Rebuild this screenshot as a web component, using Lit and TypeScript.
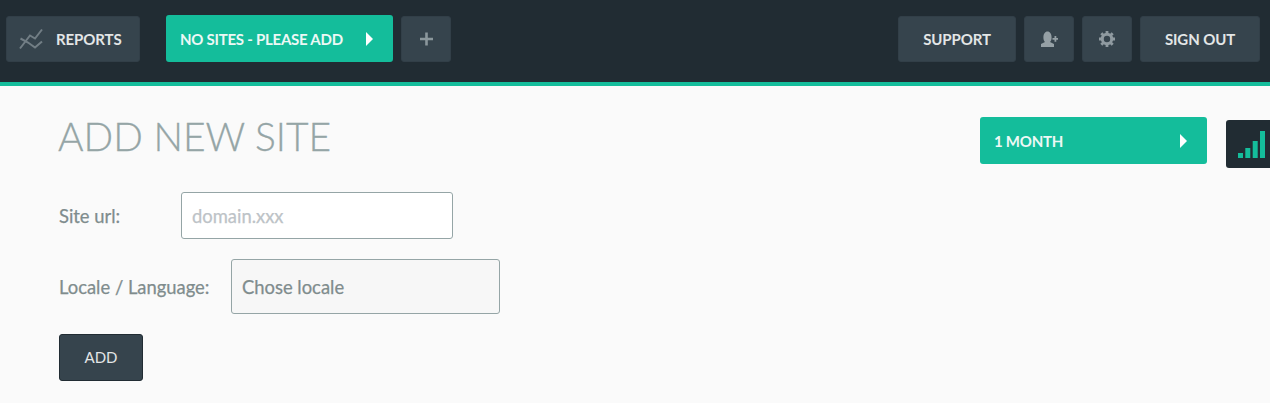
import { LitElement, html, css } from "lit";
import { customElement } from "lit/decorators.js";

@customElement("app-root")
export class AppRoot extends LitElement {
  static styles = css`
    :host { display: block; width: 1270px; height: 403px; overflow: hidden; background: #fafafa; font-family: Lato, sans-serif; }
    * { box-sizing: border-box; }
    header { height: 86px; background: #212c33; border-bottom: 4px solid #14bd9b; display: flex; align-items: flex-start; padding: 15px 10px 0 6px; }
    .btn { height: 46px; margin-top: 1px; display: flex; align-items: center; justify-content: center; background: #36444d; border: 1px solid #323f48; border-radius: 3px; color: #e3e6e6; font-size: 15px; font-weight: 700; letter-spacing: -0.1px; padding-bottom: 1px; }
    .reports { width: 134px; justify-content: flex-start; padding-left: 12px; gap: 13px; }
    .teal { background: #14bd9b; color: #ecf8f5; border-radius: 3px; height: 47px; display: flex; align-items: center; justify-content: space-between; font-size: 15px; font-weight: 700; letter-spacing: -0.25px; width: 227px; padding: 0 20px 0 14px; }
    .nosites { margin-left: 26px; }
    .square { width: 50px; }
    .plus { margin-left: 8px; }
    .support { margin-left: auto; width: 118px; }
    .g8 { margin-left: 8px; }
    .signout { width: 120px; }
    .arrow { width: 0; height: 0; border-style: solid; border-width: 7px 0 7px 7px; border-color: transparent transparent transparent #fff; }
    svg { display: block; }
    main { display: flex; justify-content: space-between; align-items: flex-start; padding: 31px 0 0 59px; }
    h1 { margin: -1px 0 0 -1px; font-size: 39px; line-height: 40px; font-weight: 300; color: #95a5a6; -webkit-text-stroke: 0.3px #95a5a6; }
    .row { display: flex; align-items: center; color: #7f8c8d; font-size: 18.4px; font-weight: 400; }
    .r1 { margin-top: 36px; }
    .r1 label { width: 122px; }
    .r2 { margin-top: 20px; }
    .r2 label { width: 172px; }
    label, .select { -webkit-text-stroke: 0.25px #7f8c8d; }
    .input { width: 272px; height: 47px; background: #fff; border: 1px solid #95a5a6; border-radius: 3px; padding-left: 10px; display: flex; align-items: center; color: #bdc3c7; -webkit-text-stroke: 0.25px #bdc3c7; }
    .select { width: 269px; height: 55px; background: #f7f7f7; border: 1px solid #95a5a6; border-radius: 3px; padding-left: 10px; display: flex; align-items: center; color: #7f8c8d; }
    .add { margin-top: 20px; width: 84px; height: 47px; background: #36444d; border: 1px solid #212c33; border-radius: 3px; color: #e3e6e6; font-size: 15px; font-weight: 400; display: flex; align-items: center; justify-content: center; padding-bottom: 2px; }
    .side { display: flex; align-items: flex-start; gap: 19px; }
    .chart { margin-top: 3px; width: 44px; height: 48px; background: #212c33; border-radius: 3px 0 0 3px; padding: 11px 0 0 12px; overflow: hidden; }
  `;

  render() {
    return html`
      <header>
        <div class="btn reports">
          <svg width="24" height="24" viewBox="0 0 24 24" fill="none" stroke="#727e85" stroke-width="2">
            <path d="M1 21.500L11 8.500l5 3 7-9" />
            <path d="M1.500 11.500L9 15.500l7 5 7-6" />
          </svg>
          REPORTS
        </div>
        <div class="teal nosites">NO SITES - PLEASE ADD <span class="arrow"></span></div>
        <div class="btn square plus">
          <svg width="14" height="14" viewBox="0 0 14 14"><path d="M1 7h13M7.500 .5v13" stroke="#8b979c" stroke-width="2.600" /></svg>
        </div>
        <div class="btn support">SUPPORT</div>
        <div class="btn square g8">
          <svg width="18" height="16" viewBox="0 0 18 16" fill="#95a0a5">
            <path d="M1 16v-3l4-2c-1-1-1.600-2.500-1.600-4.500C3.400 3 5 .5 7.500 .5s4.100 2.500 4.100 6c0 2-.6 3.500-1.600 4.500l4 2v3z" />
            <path d="M12.500 7H14.500V5h1.800v2h2v1.800h-2v2h-1.800v-2h-2z" />
          </svg>
        </div>
        <div class="btn square g8">
          <svg width="16" height="16" viewBox="0 0 16 16" fill="none">
            <circle cx="8" cy="8" r="4.700" stroke="#8f9aa0" stroke-width="3" />
            <path d="M8 0v3M8 13v3M0 8h3M13 8h3M2.300 2.300l2.200 2.200M11.500 11.500l2.200 2.200M2.300 13.700l2.200-2.200M11.500 4.500l2.200-2.200" stroke="#8f9aa0" stroke-width="2.800" />
          </svg>
        </div>
        <div class="btn signout g8">SIGN OUT</div>
      </header>
      <main>
        <div>
          <h1>ADD NEW SITE</h1>
          <div class="row r1"><label>Site url:</label><div class="input">domain.xxx</div></div>
          <div class="row r2"><label>Locale / Language:</label><div class="select">Chose locale</div></div>
          <div class="add">ADD</div>
        </div>
        <div class="side">
          <div class="teal">1 MONTH <span class="arrow"></span></div>
          <div class="chart">
            <svg width="32" height="27" viewBox="0 0 32 27" fill="#14bd9b">
              <rect x="0" y="22" width="5" height="5" />
              <rect x="7.300" y="17" width="5" height="10" />
              <rect x="14.700" y="10" width="5" height="17" />
              <rect x="22" y="0" width="5" height="27" />
            </svg>
          </div>
        </div>
      </main>
    `;
  }
}
